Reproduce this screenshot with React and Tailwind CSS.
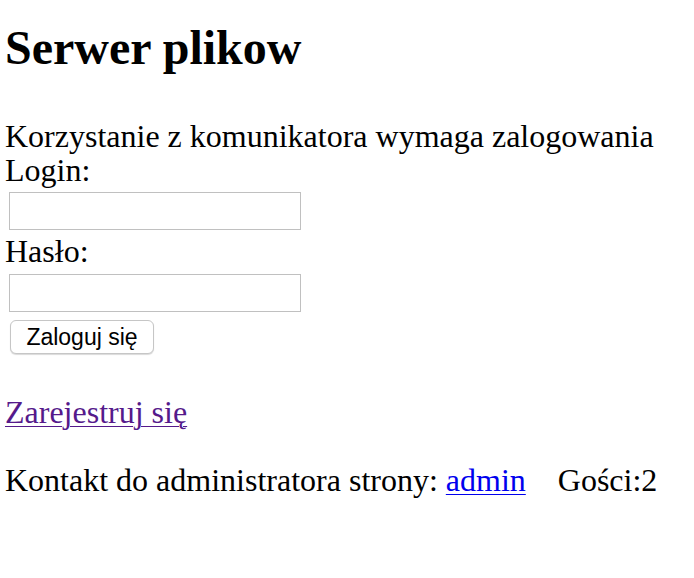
export default function App() {
  return (
    <div className="min-h-[578px] bg-white text-black pl-[5px]">
      <h1 className="pt-[24px] text-[48px] leading-[48px] font-bold font-['Liberation_Serif',serif]">
        Serwer plikow
      </h1>

      <div className="mt-[47px] text-[32px] leading-[34px] font-['Liberation_Serif',serif]">
        <p>Korzystanie z komunikatora wymaga zalogowania</p>
        <form onSubmit={(e) => e.preventDefault()}>
          <p>Login:</p>
          <input
            type="text"
            className="block mt-[5px] ml-[4px] w-[292px] h-[38px] border border-[#c0c0c0] bg-white outline-none"
          />
          <p className="mt-[4px]">Hasło:</p>
          <input
            type="password"
            className="block mt-[6px] ml-[4px] w-[292px] h-[38px] border border-[#c0c0c0] bg-white outline-none"
          />
          <button
            type="submit"
            className="block mt-[8px] ml-[5px] w-[144px] h-[34px] rounded-[6px] border border-[#c6c6c6] bg-white shadow-[0_1px_1px_rgba(0,0,0,0.15)] text-[23px] leading-none font-['Liberation_Sans',Arial,sans-serif] text-black"
          >
            Zaloguj się
          </button>
        </form>

        <p className="mt-[41px]">
          <a href="#" className="text-[#551a8b] underline decoration-1 underline-offset-[3px]">
            Zarejestruj się
          </a>
        </p>

        <p className="mt-[34px]">
          Kontakt do administratora strony:{' '}
          <a href="#" className="text-[#0000ee] underline decoration-1 underline-offset-[3px]">
            admin
          </a>
          <span className="ml-[32px]">Gości:2</span>
        </p>
      </div>
    </div>
  );
}
